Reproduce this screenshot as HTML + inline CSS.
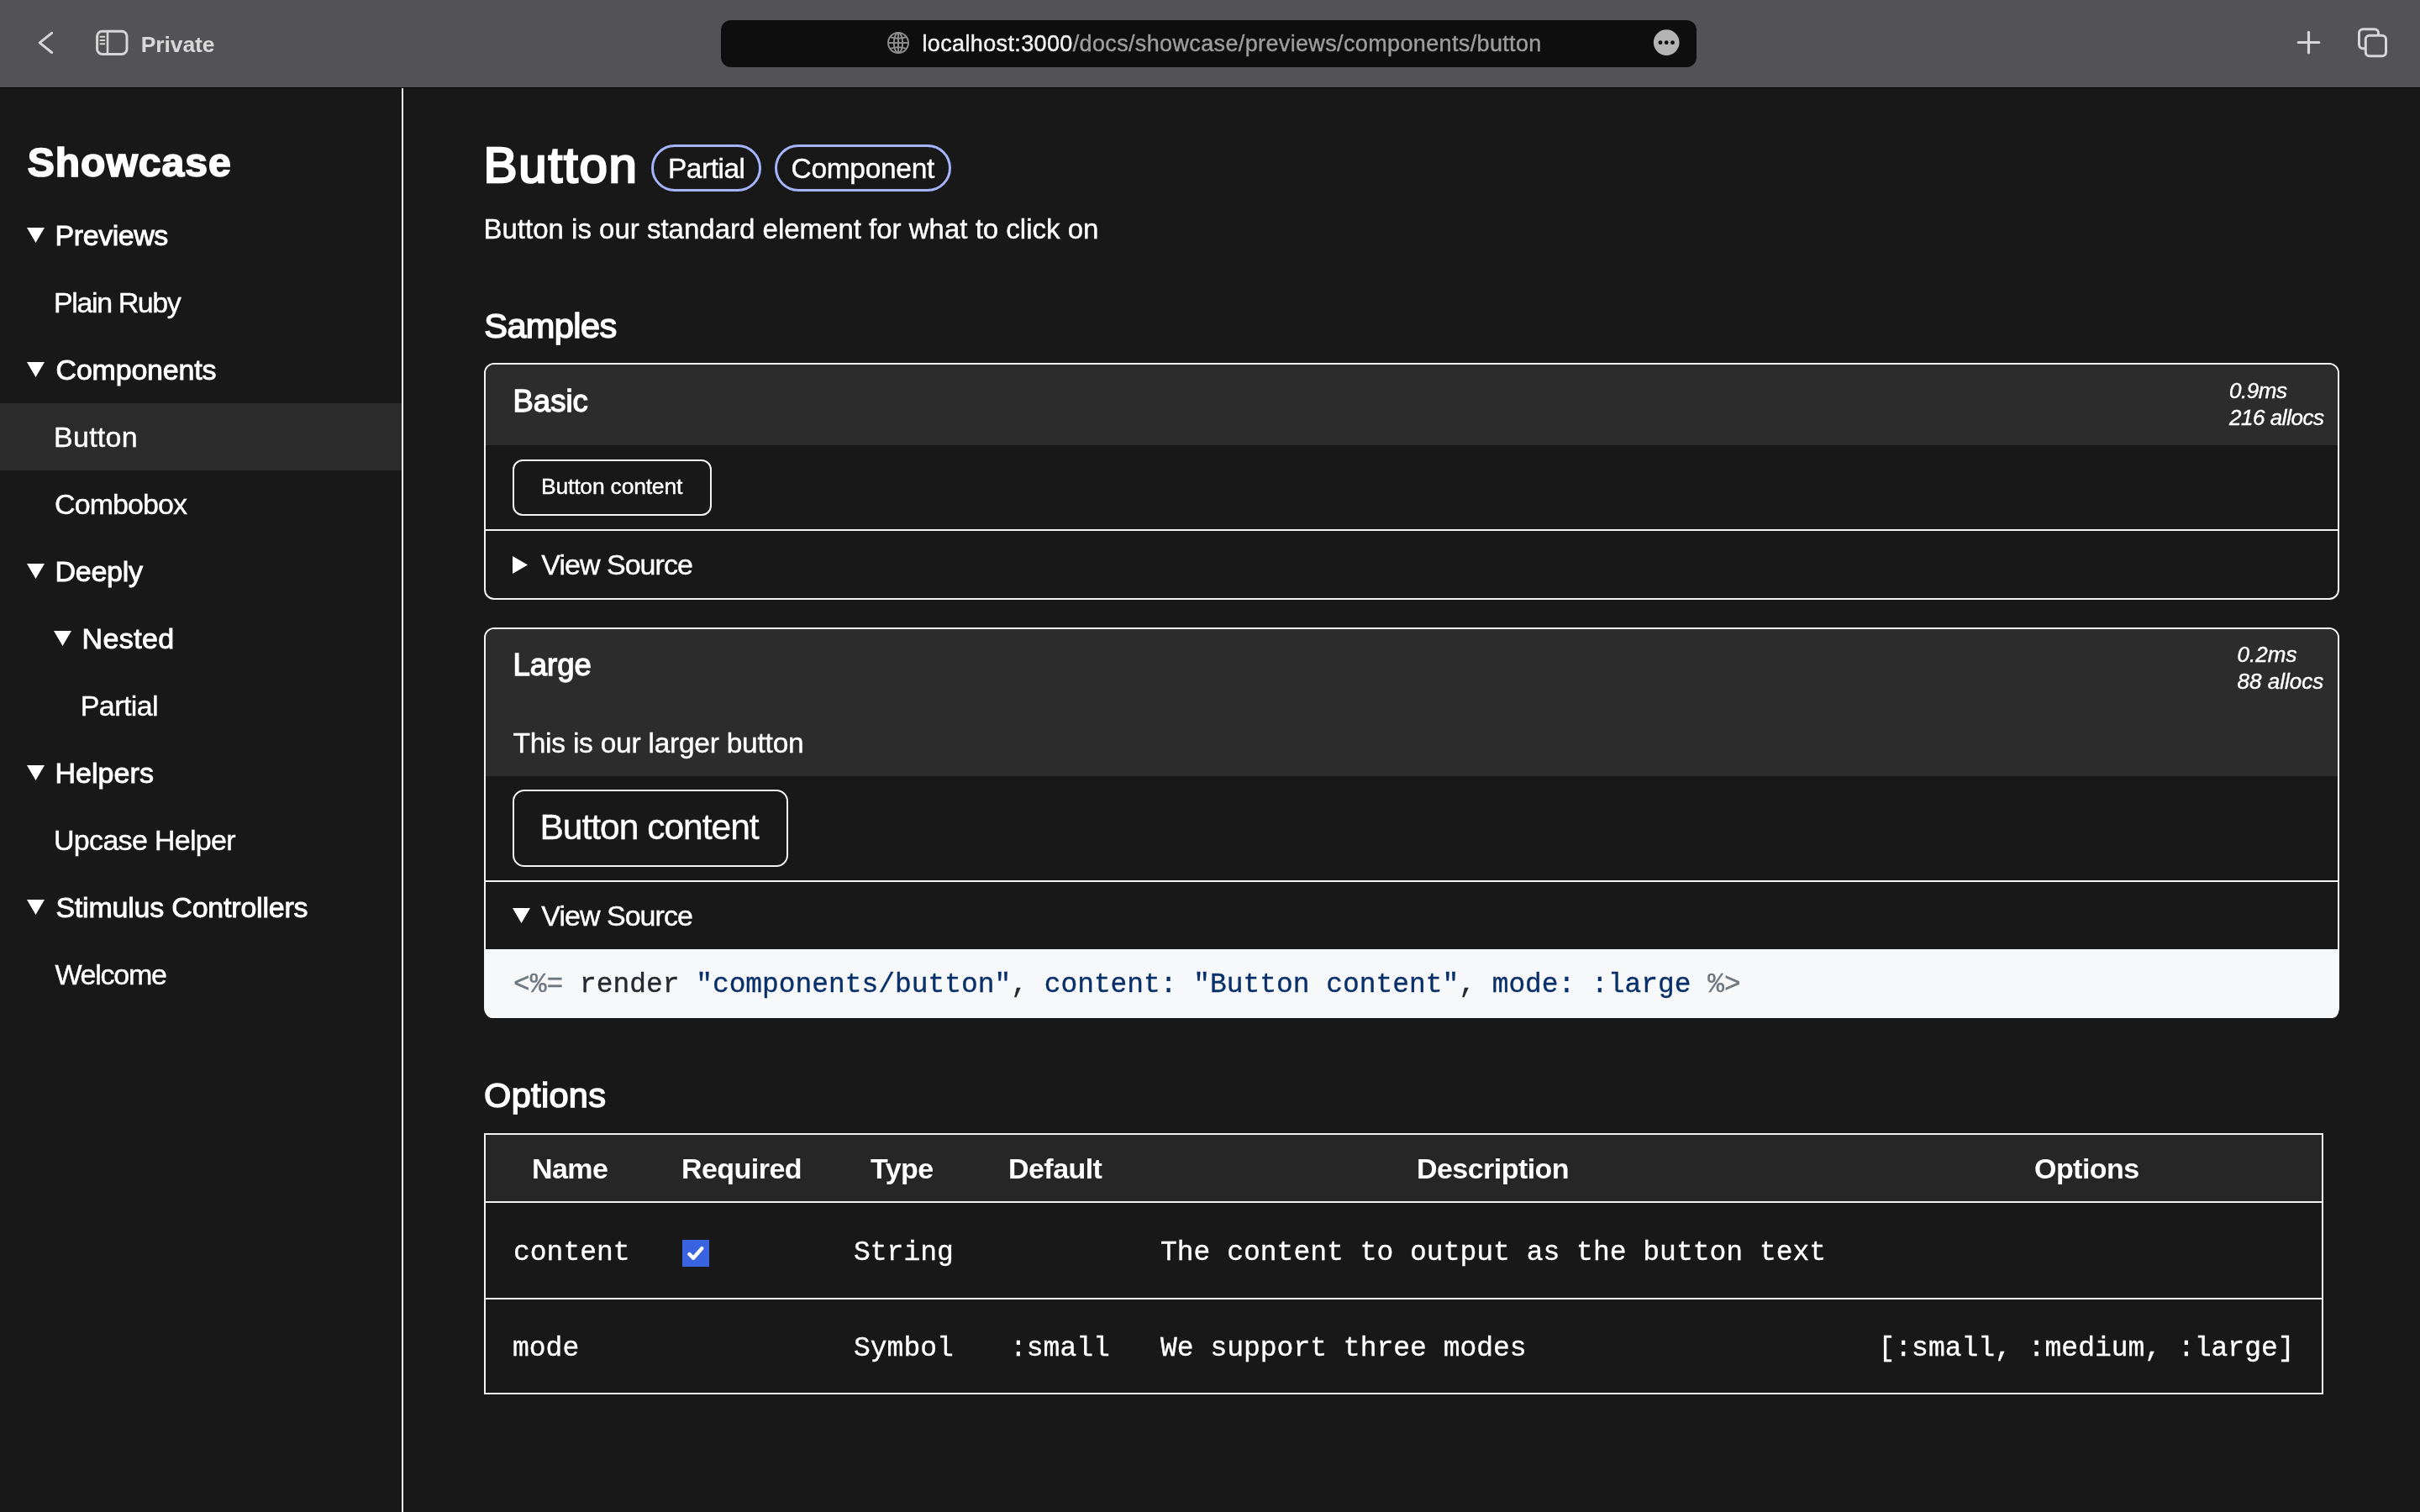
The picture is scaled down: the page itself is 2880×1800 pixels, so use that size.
<!DOCTYPE html><html><head><meta charset="utf-8"><title>Button</title><style>html,body{margin:0;padding:0;width:2880px;height:1800px;overflow:hidden;background:#181818;}body{position:relative;font-family:"Liberation Sans",sans-serif;}</style></head><body><div style="position:absolute;left:0;top:0;width:2880px;height:1800px;will-change:transform"><div style="position:absolute;left:0px;top:0px;width:2880px;height:104px;background:#535355"></div>
<div style="position:absolute;left:0px;top:104px;width:2880px;height:1px;background:#000"></div>
<svg style="position:absolute;left:0;top:0" width="300" height="104"><polyline points="61.6,39.3 47.2,50.8 61.6,62.5" fill="none" stroke="#d6d6d6" stroke-width="3" stroke-linecap="round" stroke-linejoin="round"/><rect x="115.6" y="37.2" width="35.4" height="27.2" rx="6" fill="none" stroke="#d6d6d6" stroke-width="3"/><line x1="128" y1="37" x2="128" y2="64.5" stroke="#d6d6d6" stroke-width="2.6"/><line x1="119.5" y1="43.8" x2="124.3" y2="43.8" stroke="#d6d6d6" stroke-width="2" stroke-linecap="round"/><line x1="119.5" y1="48.1" x2="124.3" y2="48.1" stroke="#d6d6d6" stroke-width="2" stroke-linecap="round"/><line x1="119.5" y1="52.3" x2="124.3" y2="52.3" stroke="#d6d6d6" stroke-width="2" stroke-linecap="round"/></svg>
<div style="position:absolute;left:167.80px;top:40.16px;font:700 26.5px/26.5px 'Liberation Sans', sans-serif;letter-spacing:-0.1px;color:#d8d8d8;white-space:pre;">Private</div>
<div style="position:absolute;left:858px;top:24px;width:1161px;height:55.5px;background:#0e0e0e;border-radius:12px"></div>
<svg style="position:absolute;left:1050px;top:32px" width="40" height="40" viewBox="0 0 40 40"><g fill="none" stroke="#8e8e8e" stroke-width="1.9"><circle cx="19" cy="19" r="12"/><ellipse cx="19" cy="19" rx="5.2" ry="12"/><line x1="19" y1="7" x2="19" y2="31"/><line x1="7" y1="19" x2="31" y2="19"/><path d="M9.5,12.2 Q19,15.2 28.5,12.2"/><path d="M9.5,25.8 Q19,22.8 28.5,25.8"/></g></svg>
<div style="position:absolute;left:1097.50px;top:38.94px;font:400 27px/27px 'Liberation Sans', sans-serif;letter-spacing:0.36px;color:#fff;white-space:pre;-webkit-text-stroke-width:0.4px;"><span style="color:#f2f2f2">localhost:3000</span><span style="color:#9d9d9d">/docs/showcase/previews/components/button</span></div>
<svg style="position:absolute;left:1960px;top:28px" width="46" height="46" viewBox="0 0 46 46"><circle cx="23.2" cy="22.6" r="15.3" fill="#b4b4b4"/><circle cx="16" cy="22.7" r="2.4" fill="#0e0e0e"/><circle cx="23.2" cy="22.7" r="2.4" fill="#0e0e0e"/><circle cx="30.5" cy="22.7" r="2.4" fill="#0e0e0e"/></svg>
<svg style="position:absolute;left:2700px;top:0" width="180" height="104"><g stroke="#d6d6d6" stroke-linecap="round" fill="none"><line x1="34" y1="38.5" x2="60.5" y2="38.5" stroke-width="0" /><line x1="47.5" y1="38.3" x2="47.5" y2="62.8" stroke-width="3.2"/><line x1="35.3" y1="50.5" x2="59.8" y2="50.5" stroke-width="3.2"/><path d="M113.5,57.8 h-1.5 a4.5,4.5 0 0 1 -4.5,-4.5 v-14 a4.5,4.5 0 0 1 4.5,-4.5 h14 a4.5,4.5 0 0 1 4.5,4.5 v1.5" stroke-width="3"/><rect x="115.3" y="42.2" width="24.2" height="24.5" rx="4.5" stroke-width="3"/></g></svg>
<div style="position:absolute;left:478px;top:105px;width:2px;height:1695px;background:#f6f7f9"></div>
<div style="position:absolute;left:0px;top:480px;width:478px;height:80px;background:#2b2b2b"></div>
<div style="position:absolute;left:32.70px;top:168.79px;font:700 48.2px/48.2px 'Liberation Sans', sans-serif;letter-spacing:0.9px;color:#ffffff;white-space:pre;-webkit-text-stroke:1.6px #fff">Showcase</div>
<svg style="position:absolute;left:32px;top:270.7px" width="21" height="18"><polygon points="0,0 21,0 10.5,18" fill="#fff"/></svg>
<div style="position:absolute;left:65.60px;top:263.21px;font:400 34px/34px 'Liberation Sans', sans-serif;letter-spacing:-0.45px;color:#ffffff;white-space:pre;-webkit-text-stroke:0.9px #fff">Previews</div>
<div style="position:absolute;left:64.10px;top:343.21px;font:400 34px/34px 'Liberation Sans', sans-serif;letter-spacing:-1.41px;color:#ffffff;white-space:pre;-webkit-text-stroke-width:0.4px;">Plain Ruby</div>
<svg style="position:absolute;left:32px;top:430.7px" width="21" height="18"><polygon points="0,0 21,0 10.5,18" fill="#fff"/></svg>
<div style="position:absolute;left:66.60px;top:423.21px;font:400 34px/34px 'Liberation Sans', sans-serif;letter-spacing:-0.22000000000000003px;color:#ffffff;white-space:pre;-webkit-text-stroke:0.9px #fff">Components</div>
<div style="position:absolute;left:64.10px;top:503.21px;font:400 34px/34px 'Liberation Sans', sans-serif;letter-spacing:0.24px;color:#ffffff;white-space:pre;-webkit-text-stroke-width:0.4px;">Button</div>
<div style="position:absolute;left:65.10px;top:583.21px;font:400 34px/34px 'Liberation Sans', sans-serif;letter-spacing:-0.93px;color:#ffffff;white-space:pre;-webkit-text-stroke-width:0.4px;">Combobox</div>
<svg style="position:absolute;left:32px;top:670.7px" width="21" height="18"><polygon points="0,0 21,0 10.5,18" fill="#fff"/></svg>
<div style="position:absolute;left:65.40px;top:663.21px;font:400 34px/34px 'Liberation Sans', sans-serif;letter-spacing:-0.22999999999999998px;color:#ffffff;white-space:pre;-webkit-text-stroke:0.9px #fff">Deeply</div>
<svg style="position:absolute;left:64px;top:750.7px" width="21" height="18"><polygon points="0,0 21,0 10.5,18" fill="#fff"/></svg>
<div style="position:absolute;left:97.60px;top:743.21px;font:400 34px/34px 'Liberation Sans', sans-serif;letter-spacing:0.37px;color:#ffffff;white-space:pre;-webkit-text-stroke:0.9px #fff">Nested</div>
<div style="position:absolute;left:95.80px;top:823.21px;font:400 34px/34px 'Liberation Sans', sans-serif;letter-spacing:-0.6px;color:#ffffff;white-space:pre;-webkit-text-stroke-width:0.4px;">Partial</div>
<svg style="position:absolute;left:32px;top:910.7px" width="21" height="18"><polygon points="0,0 21,0 10.5,18" fill="#fff"/></svg>
<div style="position:absolute;left:65.40px;top:903.21px;font:400 34px/34px 'Liberation Sans', sans-serif;letter-spacing:0.06999999999999999px;color:#ffffff;white-space:pre;-webkit-text-stroke:0.9px #fff">Helpers</div>
<div style="position:absolute;left:64.00px;top:983.21px;font:400 34px/34px 'Liberation Sans', sans-serif;letter-spacing:-0.69px;color:#ffffff;white-space:pre;-webkit-text-stroke-width:0.4px;">Upcase Helper</div>
<svg style="position:absolute;left:32px;top:1070.7px" width="21" height="18"><polygon points="0,0 21,0 10.5,18" fill="#fff"/></svg>
<div style="position:absolute;left:66.40px;top:1063.21px;font:400 34px/34px 'Liberation Sans', sans-serif;letter-spacing:-0.21000000000000002px;color:#ffffff;white-space:pre;-webkit-text-stroke:0.9px #fff">Stimulus Controllers</div>
<div style="position:absolute;left:65.40px;top:1143.21px;font:400 34px/34px 'Liberation Sans', sans-serif;letter-spacing:-1.27px;color:#ffffff;white-space:pre;-webkit-text-stroke-width:0.4px;">Welcome</div>
<div style="position:absolute;left:575.50px;top:166.60px;font:400 60px/60px 'Liberation Sans', sans-serif;letter-spacing:1.8px;color:#ffffff;white-space:pre;-webkit-text-stroke:2.6px #fff">Button</div>
<div style="position:absolute;left:775px;top:172px;width:131px;height:55.6px;box-sizing:border-box;border:3px solid #a5b4fc;border-radius:28px"></div>
<div style="position:absolute;left:795.00px;top:183.64px;font:400 33.5px/33.5px 'Liberation Sans', sans-serif;letter-spacing:-0.5px;color:#ffffff;white-space:pre;-webkit-text-stroke-width:0.4px;">Partial</div>
<div style="position:absolute;left:922px;top:172px;width:210px;height:55.6px;box-sizing:border-box;border:3px solid #a5b4fc;border-radius:28px"></div>
<div style="position:absolute;left:941.50px;top:183.64px;font:400 33.5px/33.5px 'Liberation Sans', sans-serif;letter-spacing:-0.3px;color:#ffffff;white-space:pre;-webkit-text-stroke-width:0.4px;">Component</div>
<div style="position:absolute;left:575.50px;top:255.66px;font:400 33px/33px 'Liberation Sans', sans-serif;color:#ffffff;white-space:pre;-webkit-text-stroke-width:0.4px;">Button is our standard element for what to click on</div>
<div style="position:absolute;left:576.30px;top:367.06px;font:400 41.5px/41.5px 'Liberation Sans', sans-serif;letter-spacing:-0.6px;color:#ffffff;white-space:pre;-webkit-text-stroke:1.5px #fff">Samples</div>
<div style="position:absolute;left:576px;top:432px;width:2208px;height:282px;box-sizing:border-box;border:2px solid #f3f4f6;border-radius:12px;overflow:hidden"></div>
<div style="position:absolute;left:578px;top:434px;width:2204px;height:96px;background:#2c2c2c;border-radius:10px 10px 0 0"></div>
<div style="position:absolute;left:610.50px;top:459.80px;font:400 36.5px/36.5px 'Liberation Sans', sans-serif;color:#ffffff;white-space:pre;-webkit-text-stroke:1.3px #fff">Basic</div>
<div style="position:absolute;left:2653.00px;top:451.99px;font:400 26px/26px 'Liberation Sans', sans-serif;font-style:italic;letter-spacing:-0.45px;color:#ffffff;white-space:pre;-webkit-text-stroke-width:0.4px;">0.9ms</div>
<div style="position:absolute;left:2653.00px;top:483.99px;font:400 26px/26px 'Liberation Sans', sans-serif;font-style:italic;letter-spacing:-0.45px;color:#ffffff;white-space:pre;-webkit-text-stroke-width:0.4px;">216 allocs</div>
<div style="position:absolute;left:578px;top:630px;width:2204px;height:2px;background:#f3f4f6"></div>
<div style="position:absolute;left:610px;top:546.5px;width:237px;height:67px;box-sizing:border-box;border:2px solid #f3f4f6;border-radius:12px"></div>
<div style="position:absolute;left:644.00px;top:566.16px;font:400 26.5px/26.5px 'Liberation Sans', sans-serif;letter-spacing:-0.2px;color:#ffffff;white-space:pre;-webkit-text-stroke-width:0.4px;">Button content</div>
<svg style="position:absolute;left:610px;top:662px" width="18" height="21"><polygon points="0,0 18,10.5 0,21" fill="#fff"/></svg>
<div style="position:absolute;left:644.30px;top:655.21px;font:400 34px/34px 'Liberation Sans', sans-serif;letter-spacing:-0.97px;color:#ffffff;white-space:pre;-webkit-text-stroke-width:0.4px;">View Source</div>
<div style="position:absolute;left:576px;top:747px;width:2208px;height:465px;box-sizing:border-box;border:2px solid #f3f4f6;border-radius:12px;overflow:hidden"></div>
<div style="position:absolute;left:578px;top:749px;width:2204px;height:174.5px;background:#2c2c2c;border-radius:10px 10px 0 0"></div>
<div style="position:absolute;left:610.50px;top:773.50px;font:400 36.5px/36.5px 'Liberation Sans', sans-serif;color:#ffffff;white-space:pre;-webkit-text-stroke:1.3px #fff">Large</div>
<div style="position:absolute;left:2662.60px;top:765.99px;font:400 26px/26px 'Liberation Sans', sans-serif;font-style:italic;color:#ffffff;white-space:pre;-webkit-text-stroke-width:0.4px;">0.2ms</div>
<div style="position:absolute;left:2662.60px;top:797.99px;font:400 26px/26px 'Liberation Sans', sans-serif;font-style:italic;color:#ffffff;white-space:pre;-webkit-text-stroke-width:0.4px;">88 allocs</div>
<div style="position:absolute;left:578px;top:1048px;width:2204px;height:2px;background:#f3f4f6"></div>
<div style="position:absolute;left:610.50px;top:868.04px;font:400 33.5px/33.5px 'Liberation Sans', sans-serif;letter-spacing:-0.24px;color:#ffffff;white-space:pre;-webkit-text-stroke-width:0.4px;">This is our larger button</div>
<div style="position:absolute;left:610px;top:940px;width:328px;height:91.5px;box-sizing:border-box;border:2px solid #f3f4f6;border-radius:14px"></div>
<div style="position:absolute;left:642.50px;top:964.32px;font:400 42.5px/42.5px 'Liberation Sans', sans-serif;letter-spacing:-1.0px;color:#ffffff;white-space:pre;-webkit-text-stroke-width:0.4px;">Button content</div>
<svg style="position:absolute;left:610px;top:1081px" width="21" height="18"><polygon points="0,0 21,0 10.5,18" fill="#fff"/></svg>
<div style="position:absolute;left:644.30px;top:1073.41px;font:400 34px/34px 'Liberation Sans', sans-serif;letter-spacing:-0.97px;color:#ffffff;white-space:pre;-webkit-text-stroke-width:0.4px;">View Source</div>
<div style="position:absolute;left:578px;top:1130px;width:2205px;height:82px;background:#f6f8fa;border-radius:0 0 8px 8px"></div>
<div style="position:absolute;left:611.00px;top:1156.80px;font:400 32.9px/32.9px 'Liberation Mono', monospace;color:#24292f;white-space:pre;-webkit-text-stroke-width:0.35px;"><span style="color:#6e7781">&lt;%=</span> <span style="color:#24292f">render</span> <span style="color:#0a3069">"components/button"</span><span style="color:#24292f">,</span> <span style="color:#0a3069">content:</span> <span style="color:#0a3069">"Button content"</span><span style="color:#24292f">,</span> <span style="color:#0a3069">mode:</span> <span style="color:#0a3069">:large</span> <span style="color:#6e7781">%&gt;</span></div>
<div style="position:absolute;left:576.10px;top:1283.16px;font:400 41.5px/41.5px 'Liberation Sans', sans-serif;letter-spacing:0.3px;color:#ffffff;white-space:pre;-webkit-text-stroke:1.5px #fff">Options</div>
<div style="position:absolute;left:576px;top:1349px;width:2189px;height:311px;box-sizing:border-box;border:2px solid #f3f4f6"></div>
<div style="position:absolute;left:578px;top:1351px;width:2185px;height:79px;background:#262626"></div>
<div style="position:absolute;left:578px;top:1430px;width:2185px;height:2px;background:#f3f4f6"></div>
<div style="position:absolute;left:578px;top:1545px;width:2185px;height:2px;background:#f3f4f6"></div>
<div style="position:absolute;left:633.00px;top:1373.51px;font:700 34px/34px 'Liberation Sans', sans-serif;letter-spacing:-0.55px;color:#ffffff;white-space:pre;">Name</div>
<div style="position:absolute;left:811.00px;top:1373.51px;font:700 34px/34px 'Liberation Sans', sans-serif;letter-spacing:-0.55px;color:#ffffff;white-space:pre;">Required</div>
<div style="position:absolute;left:1036.00px;top:1373.51px;font:700 34px/34px 'Liberation Sans', sans-serif;letter-spacing:-0.55px;color:#ffffff;white-space:pre;">Type</div>
<div style="position:absolute;left:1200.00px;top:1373.51px;font:700 34px/34px 'Liberation Sans', sans-serif;letter-spacing:-0.55px;color:#ffffff;white-space:pre;">Default</div>
<div style="position:absolute;left:1686.00px;top:1373.51px;font:700 34px/34px 'Liberation Sans', sans-serif;letter-spacing:-0.55px;color:#ffffff;white-space:pre;">Description</div>
<div style="position:absolute;left:2421.00px;top:1373.51px;font:700 34px/34px 'Liberation Sans', sans-serif;letter-spacing:-0.55px;color:#ffffff;white-space:pre;">Options</div>
<div style="position:absolute;left:611.00px;top:1474.92px;font:400 33.0px/33.0px 'Liberation Mono', monospace;color:#ffffff;white-space:pre;-webkit-text-stroke-width:0.35px;">content</div>
<div style="position:absolute;left:1016.00px;top:1474.92px;font:400 33.0px/33.0px 'Liberation Mono', monospace;color:#ffffff;white-space:pre;-webkit-text-stroke-width:0.35px;">String</div>
<div style="position:absolute;left:1381.00px;top:1474.92px;font:400 33.0px/33.0px 'Liberation Mono', monospace;color:#ffffff;white-space:pre;-webkit-text-stroke-width:0.35px;">The content to output as the button text</div>
<div style="position:absolute;left:610.00px;top:1588.72px;font:400 33.0px/33.0px 'Liberation Mono', monospace;color:#ffffff;white-space:pre;-webkit-text-stroke-width:0.35px;">mode</div>
<div style="position:absolute;left:1016.00px;top:1588.72px;font:400 33.0px/33.0px 'Liberation Mono', monospace;color:#ffffff;white-space:pre;-webkit-text-stroke-width:0.35px;">Symbol</div>
<div style="position:absolute;left:1202.00px;top:1588.72px;font:400 33.0px/33.0px 'Liberation Mono', monospace;color:#ffffff;white-space:pre;-webkit-text-stroke-width:0.35px;">:small</div>
<div style="position:absolute;left:1381.00px;top:1588.72px;font:400 33.0px/33.0px 'Liberation Mono', monospace;color:#ffffff;white-space:pre;-webkit-text-stroke-width:0.35px;">We support three modes</div>
<div style="position:absolute;left:2235.50px;top:1588.72px;font:400 33.0px/33.0px 'Liberation Mono', monospace;color:#ffffff;white-space:pre;-webkit-text-stroke-width:0.35px;">[:small, :medium, :large]</div>
<div style="position:absolute;left:812px;top:1476px;width:32px;height:32px;background:#3a63e2"></div>
<svg style="position:absolute;left:812px;top:1476px" width="32" height="32"><polyline points="8.4,17 13.1,21.8 23.3,10.1" fill="none" stroke="#fff" stroke-width="4.4" stroke-linecap="round" stroke-linejoin="round"/></svg></div></body></html>
